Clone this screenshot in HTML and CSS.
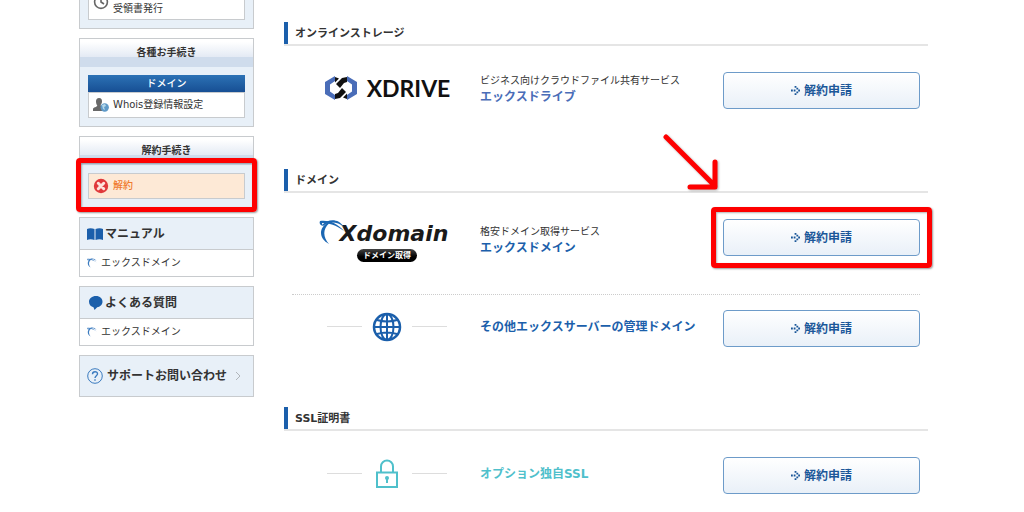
FILE: index.html
```html
<!DOCTYPE html>
<html lang="ja">
<head>
  <meta charset="UTF-8">
  <meta name="viewport" content="width=device-width, initial-scale=1.0">
  <title>解約手続き</title>
  <link rel="stylesheet" href="styles.css">
</head>
<body>

  <!-- Shared icon shapes -->
  <svg class="defs" width="0" height="0" aria-hidden="true">
    <symbol id="swirl" viewBox="0 0 26 26">
      <path d="M3 6C9 0 19-1 25 8C18 2.500 10 2 4 7Z" />
      <path d="M9 3.500C-1 9 0 20 10 25C4.500 19 3 11 10 4.500Z" />
      <path d="M1 2C10 1 18 4 25 12C17 6 10 4 3 4L3.500 7C1 6 0 4 1 2Z" />
    </symbol>
    <symbol id="dots" viewBox="0 0 10 10">
      <path d="M0 4h2v2H0zM3 4h2v2H3zM4 0h2v2H4zM6 2h2v2H6zM8 4h2v2H8zM6 6h2v2H6zM4 8h2v2H4z" />
    </symbol>
  </svg>

  <div class="page">
    <nav class="sidebar">
      <div class="panel panel-cut">
        <div class="panel-body">
          <a href="#" class="item">
            <svg class="icon" viewBox="0 0 16 16" fill="none" stroke="#666" stroke-width="1.6"><circle cx="8" cy="6" r="6.4" /><path d="M8 2v4l3 2" /></svg>
            受領書発行
          </a>
        </div>
      </div>

      <div class="panel">
        <h2 class="panel-title">各種お手続き</h2>
        <div class="panel-body">
          <h3 class="group-title">ドメイン</h3>
          <a href="#" class="item">
            <svg class="icon" viewBox="0 0 16 16"><path fill="#686868" d="M6 1c2.400 0 3 1.600 3 3.200C9 6 8.300 7 7.600 8c0 1.500 2.400 1.700 3.400 3v3H0v-2c0-1.600 4-1.900 4.300-3.500C3.500 7.500 3 6 3 4.200 3 2.500 4 1 6 1z" /><circle cx="11.700" cy="10.500" r="4.200" fill="#5f9ac8" /><path fill="#b5d8ea" d="M9 8l3-1 1 2-2 1 1 3-2-1z" /></svg>
            Whois登録情報設定
          </a>
        </div>
      </div>

      <div class="panel">
        <h2 class="panel-title">解約手続き</h2>
        <div class="panel-body marked">
          <a href="#" class="item item-current">
            <svg class="icon" viewBox="0 0 16 16"><circle cx="8" cy="8" r="7.200" fill="#e0393b" /><path d="M5.300 5.300l5.400 5.400M10.700 5.300l-5.400 5.400" stroke="#fde3dc" stroke-width="3" stroke-linecap="round" /></svg>
            解約
          </a>
        </div>
      </div>

      <div class="panel">
        <h2 class="link-title">
          <svg class="icon" viewBox="0 0 16 16" fill="#1b5fab"><path d="M0 3c2-1 5-1 7.500 0v11C5 13 2 13 0 14zM8.500 3c2.500-1 5.500-1 7.500 0v11c-2-1-5-1-7.500 0z" /></svg>
          マニュアル
        </h2>
        <a href="#" class="sub-link"><svg class="icon-small"><use href="#swirl" /></svg>エックスドメイン</a>
      </div>

      <div class="panel">
        <h2 class="link-title">
          <svg class="icon" viewBox="0 0 16 16" fill="#1b5fab"><path d="M9 1c4 0 6.500 2.500 6.500 5.700 0 3-2.500 5.100-5.300 5.500L7.500 15l-1-2.800C4 11.700 2 9.700 2 6.700 2 3.500 5 1 9 1z" /></svg>
          よくある質問
        </h2>
        <a href="#" class="sub-link"><svg class="icon-small"><use href="#swirl" /></svg>エックスドメイン</a>
      </div>

      <a href="#" class="panel support">
        <svg class="icon" viewBox="0 0 16 16" fill="none" stroke="#3b7bbf"><circle cx="8" cy="8" r="7.300" /><path d="M5.500 6.200C5.500 2.800 10.700 3 10.500 6 10.400 7.700 8 7.800 8 10M8 11.300v1.500" stroke-width="1.400" /></svg>
        サポートお問い合わせ
        <svg class="chevron" viewBox="0 0 6 10" fill="none" stroke="#b0b5ba"><path d="M1 1l4 4-4 4" /></svg>
      </a>
    </nav>

    <main class="main">
      <section class="category">
        <h2 class="category-title">オンラインストレージ</h2>
        <div class="service">
          <div class="logo xdrive">
            <svg width="34" height="24" viewBox="0 0 34 24" aria-hidden="true">
              <path fill="#4a6db8" d="M11 0v5L6 8.500v7L11 19v5L1 18V6zM23 0v5l5 3.500v7L23 19v5l10-6V6z" />
              <path fill="#111" d="M11 1l4 1.500-4 4zM23 23l-4-1.500 4-4zM12 8l6-6 5-1v5l-3 1-4 5zM22 16l-6 6-5 1v-5l3-1 4-5z" />
            </svg>
            <span>XDRIVE</span>
          </div>
          <div class="info">
            <p>ビジネス向けクラウドファイル共有サービス</p>
            <strong class="name name-drive">エックスドライブ</strong>
          </div>
          <div class="action">
            <button type="button" class="cancel"><svg><use href="#dots" /></svg>解約申請</button>
          </div>
        </div>
      </section>

      <section class="category">
        <h2 class="category-title">ドメイン</h2>
        <div class="service">
          <div class="logo xdomain">
            <svg class="swirl" aria-hidden="true"><use href="#swirl" /></svg>
            <span class="wordmark">Xdomain</span>
            <span class="tag">ドメイン取得</span>
          </div>
          <div class="info">
            <p>格安ドメイン取得サービス</p>
            <strong class="name">エックスドメイン</strong>
          </div>
          <div class="action marked">
            <svg class="arrow" viewBox="0 0 58 58" aria-hidden="true"><path d="M4 4l49 49M53 29v25H28" /></svg>
            <button type="button" class="cancel"><svg><use href="#dots" /></svg>解約申請</button>
          </div>
        </div>
        <div class="service">
          <div class="logo ruled">
            <svg width="30" height="30" viewBox="0 0 30 30" fill="none" stroke="#1b5fab" stroke-width="2" aria-hidden="true"><circle cx="15" cy="15" r="13" stroke-width="2.500" /><ellipse cx="15" cy="15" rx="6.500" ry="13" /><path d="M15 2v26M2 15h26M5 8q10 3 20 0M5 22q10-3 20 0" /></svg>
          </div>
          <div class="info">
            <strong class="name">その他エックスサーバーの管理ドメイン</strong>
          </div>
          <div class="action">
            <button type="button" class="cancel"><svg><use href="#dots" /></svg>解約申請</button>
          </div>
        </div>
      </section>

      <section class="category">
        <h2 class="category-title">SSL証明書</h2>
        <div class="service">
          <div class="logo ruled">
            <svg width="30" height="30" viewBox="0 0 30 30" fill="none" stroke="#4fc0cb" stroke-width="2" aria-hidden="true"><path d="M5 13.500h20V28H5zM9 13V7.500a6 6 0 0 1 12 0V13" /><circle cx="15" cy="19" r="2" fill="#4fc0cb" stroke="none" /><path d="M15 19v5" /></svg>
          </div>
          <div class="info">
            <strong class="name name-ssl">オプション独自SSL</strong>
          </div>
          <div class="action">
            <button type="button" class="cancel"><svg><use href="#dots" /></svg>解約申請</button>
          </div>
        </div>
      </section>
    </main>
  </div>

</body>
</html>
```
FILE: styles.css
```css
* {
  box-sizing: border-box;
}

body {
  margin: 0;
  background: #fff;
  color: #333;
  font-family: "DejaVu Sans", "Noto Sans CJK JP", sans-serif;
  font-size: 10px;
  line-height: 16px;
}

h2, h3, p {
  margin: 0;
}

a {
  color: inherit;
  text-decoration: none;
}

svg {
  flex: none;
}

.defs {
  position: absolute;
}

.page {
  display: flex;
  gap: 30px;
  padding: 0 96px 0 79px;
}

/* Sidebar */
.sidebar {
  flex: 0 0 175px;
  display: flex;
  flex-direction: column;
  gap: 9px;
}

.panel {
  border: 1px solid #c8cbce;
  background: #e8f0f8;
}

.panel-cut {
  border-top: none;
}

.panel-title {
  height: 28px;
  font-size: 10px;
  line-height: 28px;
  text-align: center;
  background: linear-gradient(#fff 10%, #e3eaf4 65%, #cfdcec 66%);
}

.panel-body {
  padding: 8px;
}

.panel-cut .panel-body {
  padding-top: 0;
}

.group-title {
  height: 17px;
  color: #fff;
  font-size: 10px;
  font-weight: 500;
  line-height: 17px;
  text-align: center;
  background: linear-gradient(#2c72b5, #174f94);
}

.item {
  display: flex;
  align-items: center;
  gap: 4px;
  height: 26px;
  padding: 0 4px;
  border: 1px solid #c8cbce;
  background: #fff;
}

.panel-cut .item {
  height: 20px;
  padding-bottom: 2px;
  border-top: none;
}

.panel-cut .icon {
  align-self: flex-start;
  margin-top: -4px;
}

.item-current {
  color: #f07a2c;
  font-weight: 500;
  background: #fde9d6;
}

.icon {
  width: 16px;
  height: 16px;
}

.link-title {
  display: flex;
  align-items: center;
  gap: 2px;
  height: 32px;
  padding: 0 7px;
  border-bottom: 1px solid #c8cbce;
  font-size: 12px;
}

.sub-link {
  display: flex;
  align-items: center;
  gap: 4px;
  height: 26px;
  padding: 0 7px;
  background: #fff;
}

.icon-small {
  width: 10px;
  height: 10px;
  fill: #3b7bbf;
}

.support {
  display: flex;
  align-items: center;
  gap: 4px;
  height: 42px;
  padding: 0 7px;
  font-size: 12px;
  font-weight: bold;
}

.chevron {
  width: 6px;
  height: 10px;
  margin-left: 4px;
}

/* Red frame round the things to click */
.marked {
  position: relative;
}

.marked::after {
  content: "";
  position: absolute;
  inset: -12px;
  border: 5px solid #fe0000;
  border-radius: 4px;
  box-shadow: 1px 1px 2px rgba(0, 0, 0, 0.4), inset 1px 1px 2px rgba(0, 0, 0, 0.3);
  pointer-events: none;
}

.panel-body.marked::after {
  inset: -7px -4px -5px;
}

.arrow {
  position: absolute;
  right: 200px;
  bottom: 65px;
  width: 58px;
  height: 58px;
  fill: none;
  stroke: #fe0000;
  stroke-width: 5;
  stroke-linecap: round;
  stroke-linejoin: round;
  filter: drop-shadow(1px 1px 1px rgba(0, 0, 0, 0.3));
}

/* Main column */
.main {
  flex: 1;
  padding-top: 22px;
}

.category {
  margin-bottom: 60px;
}

.category:last-child {
  margin-bottom: 0;
}

.category-title {
  height: 24px;
  padding-left: 6px;
  background: linear-gradient(#1b5fab, #1b5fab) left / 4px 100% no-repeat;
  border-bottom: 2px solid #e5e5e5;
  padding-left: 11px;
  font-size: 11px;
  line-height: 24px;
}

.service {
  display: grid;
  grid-template-columns: 188px 1fr 197px;
  align-items: center;
  margin: 0 8px;
  padding-top: 26px;
}

.service + .service {
  margin-top: 38px;
  padding-top: 15px;
  border-top: 1px dotted #ccc;
}

.logo {
  display: flex;
  align-items: center;
  justify-content: center;
  padding-left: 2px;
}

.info {
  padding-bottom: 4px;
}

.xdrive {
  gap: 9px;
  padding-bottom: 6px;
  color: #111;
  font: bold 23px/24px Lato, sans-serif;
}

.xdomain {
  position: relative;
  flex-direction: column;
  margin-bottom: -6px;
  color: #1a1a1a;
}

.xdomain + .info {
  align-self: end;
  padding-bottom: 0;
}

.swirl {
  position: absolute;
  left: 27px;
  top: 0;
  width: 26px;
  height: 26px;
  fill: #1b67b3;
}

.wordmark {
  padding-left: 14px;
  font-size: 22px;
  font-style: italic;
  font-weight: bold;
  line-height: 30px;
}

.tag {
  padding: 0 6px;
  border-radius: 7px;
  background: linear-gradient(#444, #000 60%);
  color: #fff;
  font-size: 8px;
  font-weight: bold;
  line-height: 13px;
}

.ruled {
  gap: 10px;
  padding-bottom: 4px;
}

.ruled::before,
.ruled::after {
  content: "";
  width: 35px;
  height: 1px;
  background: #ddd;
}

.name {
  display: block;
  color: #1b5fab;
  font-size: 12px;
}

.name-drive {
  color: #4a6db8;
}

.name-ssl {
  color: #4fc0cb;
}

.cancel {
  display: flex;
  align-items: center;
  justify-content: center;
  gap: 4px;
  width: 100%;
  height: 37px;
  padding: 0 0 1px;
  border: 1px solid #6d9bc9;
  border-radius: 4px;
  background: linear-gradient(#fff, #e9f0f8);
  color: #1b5799;
  font: bold 12px/16px "Noto Sans CJK JP", sans-serif;
  cursor: pointer;
}

.cancel svg {
  width: 9px;
  height: 9px;
  fill: #1b5799;
}
```
